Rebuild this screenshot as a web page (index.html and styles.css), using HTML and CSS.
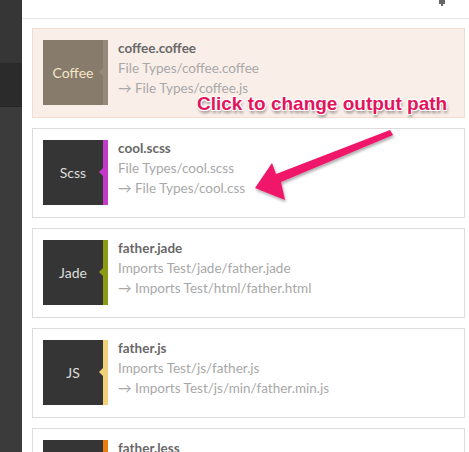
FILE: index.html
```html
<!DOCTYPE html>
<html>
<head>
<meta charset="utf-8">
<link rel="stylesheet" href="styles.css">
</head>
<body>
<div class="app">
  <aside class="sidebar">
    <div class="sb-top"></div>
    <div class="sb-active"></div>
    <div class="sb-rest"></div>
  </aside>
  <main class="main">
    <header class="topbar">
      <svg class="pin" width="8" height="6" viewBox="0 0 8 6"><path d="M1 0h6v4H5v2H3V4H1z" fill="#666"/></svg>
    </header>
    <ul class="list">
      <li class="card selected">
        <div class="badge coffee"><span class="label">Coffee</span><span class="stripe"></span></div>
        <div class="info">
          <div class="title">coffee.coffee</div>
          <div class="path">File Types/coffee.coffee</div>
          <div class="path">→ File Types/coffee.js</div>
        </div>
      </li>
      <li class="card">
        <div class="badge scss"><span class="label">Scss</span><span class="stripe"></span></div>
        <div class="info">
          <div class="title">cool.scss</div>
          <div class="path">File Types/cool.scss</div>
          <div class="path">→ File Types/cool.css</div>
        </div>
      </li>
      <li class="card">
        <div class="badge jade"><span class="label">Jade</span><span class="stripe"></span></div>
        <div class="info">
          <div class="title">father.jade</div>
          <div class="path">Imports Test/jade/father.jade</div>
          <div class="path">→ Imports Test/html/father.html</div>
        </div>
      </li>
      <li class="card">
        <div class="badge js"><span class="label">JS</span><span class="stripe"></span></div>
        <div class="info">
          <div class="title">father.js</div>
          <div class="path">Imports Test/js/father.js</div>
          <div class="path">→ Imports Test/js/min/father.min.js</div>
        </div>
      </li>
      <li class="card">
        <div class="badge less"><span class="label">Less</span><span class="stripe"></span></div>
        <div class="info">
          <div class="title">father.less</div>
          <div class="path">Imports Test/less/father.less</div>
          <div class="path">→ Imports Test/css/father.css</div>
        </div>
      </li>
    </ul>
  </main>
  <div class="callout">Click to change output path</div>
  <svg class="arrow" width="160" height="100" viewBox="0 0 160 100">
    <defs>
      <filter id="sh" x="-20%" y="-20%" width="140%" height="140%">
        <feDropShadow dx="1" dy="2" stdDeviation="1.5" flood-color="#000" flood-opacity="0.35"/>
      </filter>
    </defs>
    <polygon points="140,10 143,15 31,62 35,80 5,68 22,43 26,54" fill="#f0196b" filter="url(#sh)"/>
  </svg>
</div>
</body>
</html>
```

FILE: styles.css
```css
* { box-sizing: border-box; }
html, body { margin: 0; padding: 0; }
body {
  width: 469px;
  height: 452px;
  overflow: hidden;
  background: #fff;
  font-family: Lato, "Open Sans", sans-serif;
}
.app {
  position: relative;
  display: flex;
  height: 452px;
  overflow: hidden;
}
.sidebar {
  width: 22px;
  flex: none;
  display: flex;
  flex-direction: column;
  background: #3a3a3a;
}
.sb-top { height: 63px; flex: none; background: #363636; }
.sb-active { height: 44px; flex: none; background: #2b2b2b; border-bottom: 1px solid #262626; }
.sb-rest { flex: 1; background: #3b3b3b; }
.main {
  flex: 1;
  display: flex;
  flex-direction: column;
  min-width: 0;
  overflow: hidden;
}
.topbar {
  flex: none;
  height: 19px;
  border-bottom: 1px solid #e6e6e6;
  display: flex;
  justify-content: flex-end;
  align-items: flex-start;
  padding-right: 23px;
}
.pin { display: block; }
.list {
  flex: none;
  list-style: none;
  margin: 0;
  padding: 9px 4px 0 10px;
}
.card {
  height: 90px;
  margin-bottom: 10px;
  border: 1px solid #dcdcdc;
  background: #fff;
  display: flex;
  align-items: flex-start;
  padding: 9px 10px 0 10px;
}
.card.selected {
  background: #faeee9;
  border-color: #f1dcd2;
}
.badge {
  margin-top: 2px;
  width: 65px;
  height: 65px;
  flex: none;
  display: flex;
  background: #353535;
  position: relative;
}
.badge .label {
  width: 60px;
  display: flex;
  align-items: center;
  justify-content: center;
  color: #dedede;
  font-size: 14px;
}
.badge .stripe {
  width: 5px;
  position: relative;
}
.badge .stripe::before {
  content: "";
  position: absolute;
  left: -4px;
  top: 28px;
  border-style: solid;
  border-width: 4px 4px 4px 0;
  border-color: transparent;
  border-right-color: inherit;
}
.coffee { background: #877b6c; }
.coffee .label { color: #f6e6c6; }
.coffee .stripe { background: #958a7b; border-color: #958a7b; }
.scss .stripe { background: #c33ac9; border-color: #c33ac9; }
.jade .stripe { background: #8b9b14; border-color: #8b9b14; }
.js .stripe { background: #f0d17a; border-color: #f0d17a; }
.less .stripe { background: #e8800e; border-color: #e8800e; }
.info {
  margin-left: 10px;
  line-height: 20px;
  font-size: 13.5px;
  white-space: nowrap;
}
.title {
  color: #686868;
  font-weight: 700;
}
.path {
  color: #a8a8a8;
}
.callout {
  position: absolute;
  left: 197px;
  top: 93px;
  font-family: "Liberation Sans", Arial, sans-serif;
  font-weight: 700;
  font-size: 19px;
  line-height: 22px;
  color: #e3145c;
  white-space: nowrap;
  text-shadow:
    -1px -1px 0 #fff, 1px -1px 0 #fff, -1px 1px 0 #fff, 1px 1px 0 #fff,
    0 -1px 0 #fff, 0 1px 0 #fff, -1px 0 0 #fff, 1px 0 0 #fff,
    1px 3px 3px rgba(0,0,0,0.45);
}
.arrow {
  position: absolute;
  left: 250px;
  top: 120px;
}
```
